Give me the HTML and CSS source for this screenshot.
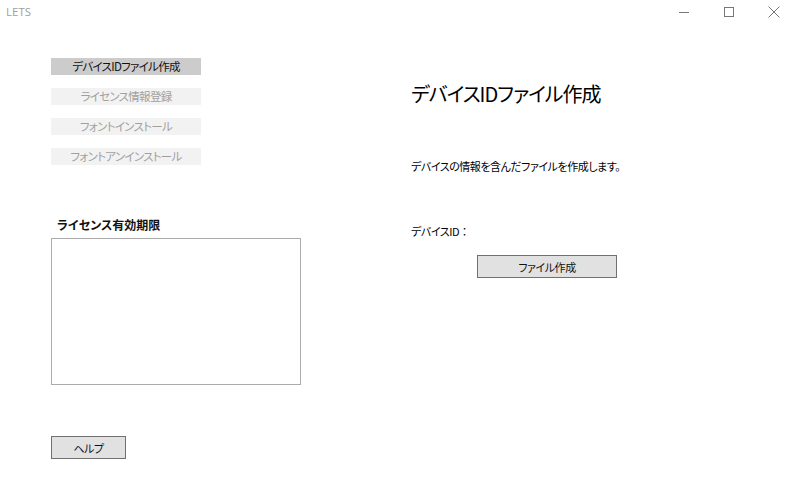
FILE: index.html
```html
<!DOCTYPE html>
<html lang="ja">
<head>
<meta charset="utf-8">
<title>LETS</title>
<link rel="stylesheet" href="styles.css">
</head>
<body>
<div class="window">
  <header class="titlebar">
    <span class="app-title">LETS</span>
    <div class="controls">
      <span class="ctl">
        <svg width="12" height="12" viewBox="0 0 12 12"><line x1="1" y1="6.5" x2="11" y2="6.5" stroke="#777" stroke-width="1"/></svg>
      </span>
      <span class="ctl">
        <svg width="12" height="12" viewBox="0 0 12 12"><rect x="1.5" y="1.5" width="9" height="9" fill="none" stroke="#777" stroke-width="1"/></svg>
      </span>
      <span class="ctl">
        <svg width="12" height="12" viewBox="0 0 12 12"><path d="M0.5 0.5 L11.5 11.5 M11.5 0.5 L0.5 11.5" stroke="#777" stroke-width="1"/></svg>
      </span>
    </div>
  </header>
  <main class="content">
    <section class="left">
      <nav class="menu">
        <div class="menu-item active">デバイスIDファイル作成</div>
        <div class="menu-item">ライセンス情報登録</div>
        <div class="menu-item">フォントインストール</div>
        <div class="menu-item">フォントアンインストール</div>
      </nav>
      <div class="license-label">ライセンス有効期限</div>
      <div class="license-box"></div>
      <button class="btn help-btn">ヘルプ</button>
    </section>
    <section class="right">
      <h1 class="heading">デバイスIDファイル作成</h1>
      <p class="desc">デバイスの情報を含んだファイルを作成します。</p>
      <p class="device-id">デバイスID<span class="fullwidth">：</span></p>
      <div class="actions">
        <button class="btn create-btn">ファイル作成</button>
      </div>
    </section>
  </main>
</div>
</body>
</html>
```
FILE: styles.css
```css
html, body {
  margin: 0;
  padding: 0;
  background: #ffffff;
  overflow: hidden;
}
body {
  width: 794px;
  height: 497px;
  font-family: "Noto Sans CJK JP", "Noto Sans", sans-serif;
  font-feature-settings: "palt";
  font-size: 11px;
  letter-spacing: -0.45px;
  color: #000;
}
.window {
  width: 794px;
  height: 497px;
  display: flex;
  flex-direction: column;
}
.titlebar {
  height: 30px;
  display: flex;
  align-items: flex-start;
  justify-content: space-between;
}
.app-title {
  margin-left: 6px;
  margin-top: 5px;
  font-size: 11.5px;
  letter-spacing: 0;
  line-height: 14px;
  color: #a0a0a0;
  font-family: "Open Sans", "Noto Sans", sans-serif;
}
.controls {
  display: flex;
  margin-right: -2px;
}
.ctl {
  width: 45px;
  height: 24px;
  display: flex;
  align-items: center;
  justify-content: center;
}
.content {
  display: flex;
  flex: 1;
}
.left {
  width: 250px;
  padding-left: 51px;
  display: flex;
  flex-direction: column;
}
.menu {
  margin-top: 28px;
  width: 150px;
  display: flex;
  flex-direction: column;
  gap: 13px;
}
.menu-item {
  height: 17px;
  line-height: 17px;
  background: #f2f2f2;
  color: #a0a0a0;
  text-align: center;
  font-size: 11.5px;
  letter-spacing: -0.7px;
}
.menu-item.active {
  background: #cccccc;
  color: #111;
}
.license-label {
  margin-top: 51px;
  margin-left: 6px;
  line-height: 17px;
  font-weight: 700;
  font-size: 12px;
  letter-spacing: 0;
  color: #111;
}
.license-box {
  margin-top: 5px;
  width: 248px;
  height: 145px;
  border: 1px solid #ababab;
}
.btn {
  font-family: inherit;
  font-feature-settings: "palt";
  font-size: 11px;
  letter-spacing: -0.45px;
  color: #111;
  background: #e1e1e1;
  border: 1px solid #707070;
  padding: 0;
  height: 23px;
  line-height: 20px;
}
.help-btn {
  margin-top: 51px;
  width: 75px;
}
.right {
  padding-left: 110px;
  display: flex;
  flex-direction: column;
}
.heading {
  margin: 50px 0 0 0;
  font-size: 20px;
  letter-spacing: -1px;
  font-weight: 400;
  line-height: 28px;
  color: #000;
}
.desc {
  margin: 50px 0 0 0;
  line-height: 16px;
}
.device-id {
  margin: 49px 0 0 0;
  line-height: 16px;
}
.fullwidth {
  font-feature-settings: normal;
  letter-spacing: 0;
}
.actions {
  margin-top: 16px;
  padding-left: 66px;
}
.create-btn {
  width: 140px;
}
```
